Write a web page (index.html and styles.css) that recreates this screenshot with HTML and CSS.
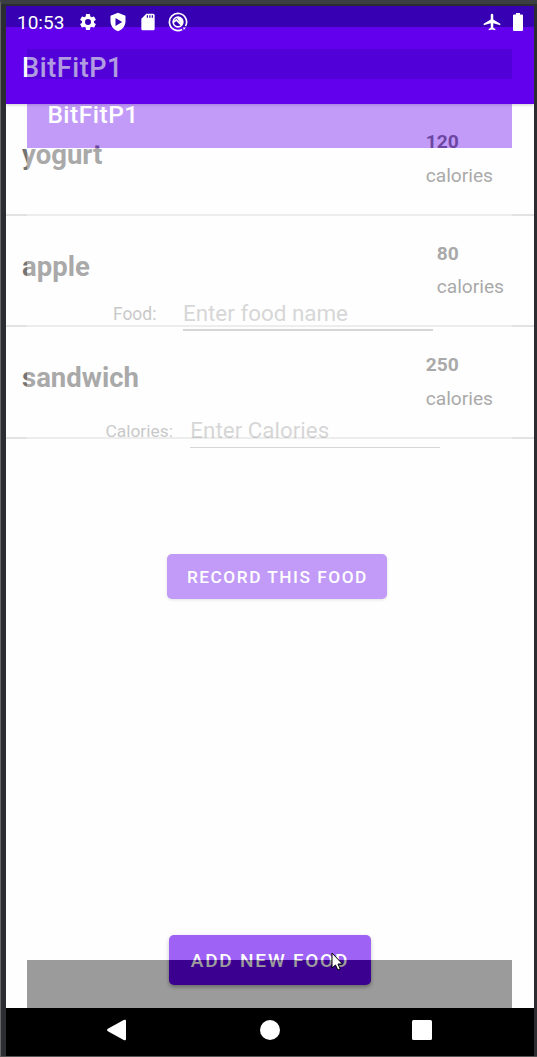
FILE: index.html
```html
<!DOCTYPE html>
<html lang="en">
<head>
<meta charset="utf-8">
<title>BitFitP1</title>
<link rel="stylesheet" href="styles.css">
</head>
<body>
<div class="device">
  <div class="screen">
    <header class="status">
      <span class="clock">10:53</span>
      <svg class="icon" viewBox="0 0 24 24"><path d="M19.14 12.94c.04-.3.06-.61.06-.94 0-.32-.02-.64-.07-.94l2.03-1.58a.49.49 0 0 0 .12-.61l-1.92-3.32a.488.488 0 0 0-.59-.22l-2.39.96c-.5-.38-1.03-.7-1.62-.94l-.36-2.54a.484.484 0 0 0-.48-.41h-3.84c-.24 0-.43.17-.47.41l-.36 2.54c-.59.24-1.13.57-1.62.94l-2.39-.96c-.22-.08-.47 0-.59.22L2.74 8.87c-.12.21-.08.47.12.61l2.03 1.58c-.05.3-.09.63-.09.94s.02.64.07.94l-2.03 1.58a.49.49 0 0 0-.12.61l1.92 3.32c.12.22.37.29.59.22l2.39-.96c.5.38 1.03.7 1.62.94l.36 2.54c.05.24.24.41.48.41h3.84c.24 0 .44-.17.47-.41l.36-2.54c.59-.24 1.13-.56 1.62-.94l2.39.96c.22.08.47 0 .59-.22l1.92-3.32c.12-.22.07-.47-.12-.61l-2.01-1.58zM12 15.6A3.6 3.6 0 1 1 12 8.4a3.6 3.6 0 0 1 0 7.2z"/></svg>
      <svg class="icon" viewBox="0 0 24 24"><path fill-rule="evenodd" d="M12 1L3 4.500V11c0 5.500 3.800 10.200 9 12 5.200-1.800 9-6.500 9-12V4.500L12 1zM9 7.300l8 4.700-8 4.700z"/></svg>
      <svg class="icon" viewBox="0 0 24 24"><path d="M18 2h-8L4 8v12c0 1.100.9 2 2 2h12c1.100 0 2-.9 2-2V4c0-1.100-.9-2-2-2zm-6 5h-1.500V4H12v3zm3 0h-1.500V4H15v3zm3 0h-1.500V4H18v3z"/></svg>
      <svg class="icon" viewBox="0 0 24 24"><path class="line" d="M21 17A10.300 10.300 0 1 0 17 21"/><circle class="line" cx="12" cy="12" r="5.800"/><path class="line" d="M7 12l3-2.500L16.500 16"/><path d="M10 6.500h5l3 4.500-1.500 4.500z"/><path d="M18 18.500h3.500L19 21.500z"/></svg>
      <svg class="icon plane" viewBox="0 0 24 24"><path d="M22 16v-2l-8.500-5V3.500a1.500 1.500 0 0 0-3 0V9L2 14v2l8.500-2.500V19L8 20.500V22l4-1 4 1v-1.500L13.500 19v-5.500z"/></svg>
      <svg class="battery" viewBox="0 0 10 18"><path d="M3 0h4v1.500h2a1 1 0 0 1 1 1V17a1 1 0 0 1-1 1H1a1 1 0 0 1-1-1V2.500a1 1 0 0 1 1-1h2z"/></svg>
    </header>
    <div class="appbar">BitFitP1</div>
    <main class="list">
      <section class="row"><h2>yogurt</h2><p><b>120</b>calories</p></section>
      <section class="row short"><h2>apple</h2><p><b>80</b>calories</p></section>
      <section class="row"><h2>sandwich</h2><p><b>250</b>calories</p></section>
      <button class="add">ADD NEW FOOD</button>
    </main>
    <div class="entering">
      <div class="e-status"></div>
      <div class="e-bar">BitFitP1</div>
      <div class="form">
        <label class="field food"><span>Food:</span><i>Enter food name</i></label>
        <label class="field cal"><span>Calories:</span><i>Enter Calories</i></label>
        <button class="record">RECORD THIS FOOD</button>
      </div>
      <div class="e-nav"></div>
    </div>
    <nav class="nav">
      <svg viewBox="0 0 22 22"><path d="M1.800 9.800L17.700 1Q20 0 20 2v18q0 2-2.300 1L1.800 12.200Q0 11 1.800 9.800z"/></svg>
      <svg viewBox="0 0 22 22"><circle cx="11" cy="11" r="10"/></svg>
      <svg viewBox="0 0 22 22"><rect x="1" y="1" width="20" height="20" rx="1.500"/></svg>
    </nav>
    <svg class="cursor" viewBox="0 0 13 19"><path d="M1 1v15l3.500-3 2.300 5 2.500-1-2.300-5h4.500z"/></svg>
  </div>
</div>
</body>
</html>
```
FILE: styles.css
```css
* { box-sizing: border-box; }
body { margin: 0; font-family: Roboto, "Noto Sans", sans-serif; }
h2, p { margin: 0; }
button { border: 0; color: #fff; font: 500 17.3px/20px Roboto, sans-serif; padding: 0; white-space: nowrap; }

.device { width: 537px; height: 1057px; background: #2b2d30; border-top: 4px solid #3c3f41; border-left: 1px solid #656769; border-bottom: 1px solid #555; padding: 2px 3px 0 5px; }
.screen { position: relative; height: 1050px; overflow: hidden; display: flex; flex-direction: column; background: #fefefe; }

.status { height: 21px; background: #3700b3; display: flex; align-items: flex-start; position: relative; z-index: 3; color: #fff; padding-left: 11px; }
.clock { width: 61px; font-size: 19px; line-height: 22px; padding-top: 6px; }
.icon { width: 20px; height: 20px; margin: 6px 10px 0 0; fill: #fff; flex: none; }
.line { fill: none; stroke: #fff; stroke-width: 2; }
.plane { margin-left: auto; margin-right: 11px; }
.battery { width: 10px; height: 18px; margin: 7px 11px 0 0; fill: #fff; }

.appbar { height: 77px; flex: none; background: #6200ee; color: #fff; font-size: 27px; font-weight: 500; line-height: 82px; padding-left: 16px; letter-spacing: .6px; box-shadow: 0 1px 3px rgba(0,0,0,.2); position: relative; }
.list { height: 904px; flex: none; display: flex; flex-direction: column; }
.row { height: 111.5px; display: flex; justify-content: space-between; padding: 21px 41px 0 16px; color: #737373; border-bottom: 2px solid #e2e2e2; }
.row.short { padding-right: 30px; }
.row h2 { font-size: 27.5px; font-weight: 700; line-height: 60px; }
.row p { font-size: 19.2px; line-height: 33.5px; }
.row b { display: block; }
.add { width: 202px; height: 50px; margin: auto auto 23px 163px; border-radius: 5px; background: #6200ee; font-size: 19px; letter-spacing: 1.800px; padding-top: 2px; box-shadow: 0 2px 4px rgba(0,0,0,.35); }

.entering { position: absolute; left: 21.400px; top: 43px; width: 485px; height: 959px; opacity: .385; background: #fff; display: flex; flex-direction: column; }
.e-status { height: 30px; background: #3700b3; }
.e-bar { height: 69px; background: #6200ee; color: #fff; font-size: 24.500px; font-weight: 500; line-height: 72px; padding-left: 20px; letter-spacing: .5px; }
.form { flex: 1; display: flex; flex-direction: column; padding-top: 146px; }
.field { display: flex; align-items: center; height: 37px; color: #737373; }
.field span { font-size: 17.500px; line-height: 20px; padding-top: 2px; }
.field i { font-style: normal; font-size: 22.400px; line-height: 38px; width: 250px; height: 37px; color: #999; border-bottom: 2px solid #999; }
.food { margin-left: 85.500px; gap: 26.500px; }
.cal { margin: 80px 0 0 78px; gap: 17.500px; }
.cal span { padding-top: 3px; font-size: 17.400px; }
.cal i { border-bottom-width: 1px; }
.record { width: 220px; height: 45px; margin: 106px 0 0 140px; border-radius: 5px; background: #6200ee; letter-spacing: 1.500px; box-shadow: 0 1px 3px rgba(0,0,0,.3); }
.e-nav { height: 48px; background: #000; }

.nav { height: 48px; flex: none; background: #000; display: flex; justify-content: space-between; align-items: center; padding: 0 101px 4px 100px; position: relative; }
.nav svg { width: 22px; height: 22px; fill: #fff; }
.cursor { position: absolute; left: 325px; top: 946px; width: 13px; height: 19px; fill: #fff; stroke: #000; stroke-width: 1; }
```
